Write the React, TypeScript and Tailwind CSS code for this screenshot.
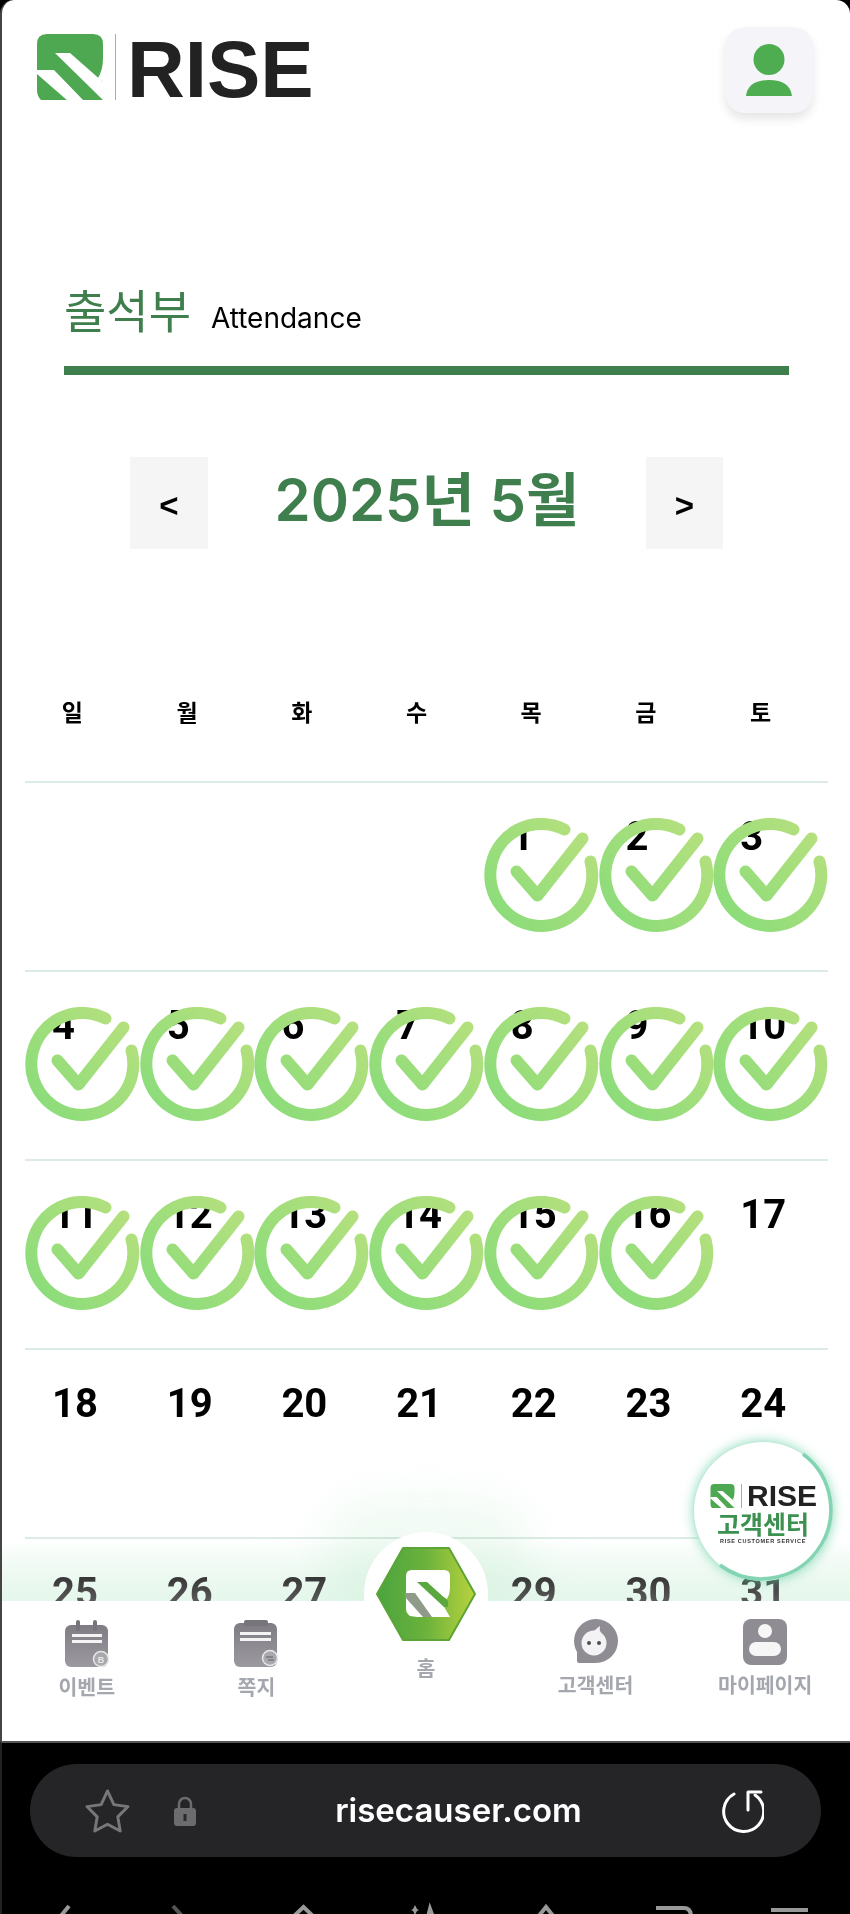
const ko = { fontFamily: '"Noto Sans CJK KR", "Noto Sans", sans-serif' };
const inter = { fontFamily: 'Inter, "Noto Sans CJK KR", sans-serif' };
const roboto = { fontFamily: 'Roboto, "Liberation Sans", sans-serif' };
const arial = { fontFamily: '"Liberation Sans", Arial, sans-serif' };

const weekdays = ['일', '월', '화', '수', '목', '금', '토'];
const weeks = [
  [0, 0, 0, 0, 1, 2, 3],
  [4, 5, 6, 7, 8, 9, 10],
  [11, 12, 13, 14, 15, 16, 17],
  [18, 19, 20, 21, 22, 23, 24],
  [25, 26, 27, 28, 29, 30, 31],
];
const lastChecked = 16;

function LogoMark({ className, green = '#4ea852' }: { className: string; green?: string }) {
  return (
    <svg viewBox="0 0 66 66" className={className}>
      <path d="M0 10Q0 0 10 0H56Q66 0 66 10V24Q66 36 61 44L66 48V66H23L4 66Q0 62 0 56Z" fill={green} />
      <polygon points="18,19 33,19 67,49 67,67" fill="#fff" />
      <polygon points="0,36 17,36 47,67 31,67 0,40" fill="#fff" />
    </svg>
  );
}

function RingCheck() {
  return (
    <svg viewBox="-57.5 -57.5 115 115" className="absolute left-0 top-[35px] w-[115px] h-[115px]">
      <defs>
        <linearGradient id="ringGrad" gradientUnits="userSpaceOnUse" x1="-50" y1="40" x2="50" y2="-50">
          <stop offset="0" stopColor="#8adc7a" />
          <stop offset="1" stopColor="#b8e07e" />
        </linearGradient>
      </defs>
      <path d="M23 -46A51 51 0 1 0 49 -14" fill="none" stroke="url(#ringGrad)" strokeWidth="12" strokeLinecap="round" />
      <path d="M-25 -4L-4 20L41 -37" fill="none" stroke="url(#ringGrad)" strokeWidth="12" strokeLinecap="round" strokeLinejoin="round" />
    </svg>
  );
}

function EventIcon() {
  return (
    <svg viewBox="0 0 44 47" className="w-[44px] h-[47px]">
      <defs>
        <linearGradient id="navGrad" x1="0" y1="0" x2="0" y2="1">
          <stop offset="0" stopColor="#7f7d83" />
          <stop offset="1" stopColor="#9c9aa0" />
        </linearGradient>
      </defs>
      <rect x="0" y="5" width="43" height="42" rx="6" fill="url(#navGrad)" />
      <rect x="11" y="0" width="4" height="11" rx="2" fill="#77757b" />
      <rect x="28" y="0" width="4" height="11" rx="2" fill="#77757b" />
      <rect x="7" y="14" width="30" height="3" fill="#f4f4f4" />
      <rect x="7" y="20" width="30" height="3" fill="#f4f4f4" />
      <circle cx="36" cy="39" r="7.5" fill="#a9a8ad" stroke="#e8e8e8" strokeWidth="1.5" />
      <text x="36" y="42.5" textAnchor="middle" fontSize="9" fontWeight="700" fill="#e8e8e8" style={arial}>B</text>
    </svg>
  );
}

function NoteIcon() {
  return (
    <svg viewBox="0 0 44 47" className="w-[44px] h-[47px]">
      <rect x="0" y="3" width="43" height="44" rx="6" fill="url(#navGrad)" />
      <rect x="10" y="0" width="24" height="6" rx="2" fill="#77757b" />
      <rect x="6" y="12" width="31" height="3" fill="#f4f4f4" />
      <rect x="6" y="18" width="31" height="3" fill="#f4f4f4" />
      <circle cx="36" cy="38" r="7.5" fill="#a9a8ad" stroke="#e8e8e8" strokeWidth="1.5" />
      <path d="M32 37h7M34 40h6" stroke="#77757b" strokeWidth="1.5" />
    </svg>
  );
}

function ChatIcon() {
  return (
    <svg viewBox="0 0 44 44" className="w-[44px] h-[44px]">
      <path d="M22 0A22 22 0 1 1 22 44H5Q3 44 3 42V33A22 22 0 0 1 22 0Z" fill="#8f8d93" />
      <circle cx="20" cy="24" r="12.5" fill="#f3f3f5" />
      <path d="M20 12Q23 9 26 7Q25 11 27 14Z" fill="#f3f3f5" />
      <circle cx="15" cy="24" r="2" fill="#4f4d53" />
      <circle cx="25" cy="24" r="2" fill="#4f4d53" />
    </svg>
  );
}

function MyPageIcon() {
  return (
    <svg viewBox="0 0 44 46" className="w-[44px] h-[46px]">
      <rect x="0" y="0" width="44" height="46" rx="8" fill="#8f8d93" />
      <circle cx="22" cy="12" r="7" fill="#f6f6f6" />
      <rect x="6" y="23" width="32" height="14" rx="7" fill="#f6f6f6" />
    </svg>
  );
}

function HomeHex() {
  return (
    <svg viewBox="0 0 100 94" className="w-[100px] h-[94px]">
      <defs>
        <linearGradient id="hexGrad" x1="0" y1="0" x2="1" y2="0">
          <stop offset="0" stopColor="#4aa43f" />
          <stop offset="0.5" stopColor="#6cb23c" />
          <stop offset="1" stopColor="#b9d33e" />
        </linearGradient>
      </defs>
      <polygon points="1,47 27,1 73,1 99,47 73,93 27,93" fill="url(#hexGrad)" stroke="#5da436" strokeWidth="2" strokeLinejoin="round" />
      <path d="M30 29Q30 23 36 23H68Q74 23 74 29V41Q74 47 71 52L60 46L74 70H41L34 69Q30 66 30 62Z" fill="#fff" />
      <polygon points="41,35 51,35 72,54 72,60 68,60" fill="#5aa83e" />
      <polygon points="29,46 39,46 56,70 47,70 29,50" fill="#8f9a88" />
    </svg>
  );
}

export default function App() {
  return (
    <div className="w-[850px] h-[1914px] bg-black flex flex-col overflow-hidden">
      <div className="relative h-[1741px] shrink-0 overflow-hidden rounded-t-[14px] border-l-2 border-[#444] bg-white">
        <div className="flex justify-between items-start h-[113px] pt-[27px] pl-[35px] pr-[37px]">
          <div className="flex items-center h-[66px] mt-[7px]">
            <LogoMark className="w-[66px] h-[66px]" />
            <div className="w-px h-[66px] bg-[#aaa] ml-[12px]" />
            <span className="ml-[11px] text-[80px] font-bold leading-none text-[#222] mt-[6px]" style={arial}>RISE</span>
          </div>
          <div className="w-[88px] h-[86px] rounded-[20px] bg-[#f5f5f9] shadow-[0_6px_10px_rgba(0,0,0,0.1)] flex items-center justify-center">
            <svg viewBox="0 0 46 52" className="w-[46px] h-[52px]">
              <ellipse cx="23" cy="15.5" rx="15.5" ry="15.5" fill="#4fad51" />
              <path d="M0 52Q2 36 23 36T46 52Z" fill="#4fad51" />
            </svg>
          </div>
        </div>

        <div className="mt-[160px] ml-[62px] w-[725px] h-[93px] flex items-baseline">
          <span className="text-[46px] leading-[70px] text-[#3f7f4d]" style={ko}>출석부</span>
          <span className="ml-[20px] text-[28px] text-black" style={inter}>Attendance</span>
        </div>
        <div className="ml-[62px] w-[725px] h-[9px] bg-[#3f7f4d]" />

        <div className="mt-[82px] ml-[128px] w-[593px] h-[92px] flex items-center justify-between">
          <div className="w-[78px] h-[92px] pt-[5px] bg-[#f5f5f5] flex items-center justify-center text-[33px] font-bold text-black" style={arial}>&lt;</div>
          <div className="pb-[6px] text-[58px] font-semibold text-[#3f7f4d] leading-none" style={inter}>2025년 5월</div>
          <div className="w-[77px] h-[92px] pt-[5px] bg-[#f5f5f5] flex items-center justify-center text-[33px] font-bold text-black" style={arial}>&gt;</div>
        </div>

        <div className="mt-[100px] pb-[8px] ml-[23px] w-[803px] h-[132px] grid grid-cols-7 items-center">
          {weekdays.map(d => (
            <div key={d} className="text-center pr-[20px] text-[23px] font-bold text-black" style={ko}>{d}</div>
          ))}
        </div>

        <div className="ml-[23px] w-[803px]">
          {weeks.map((week, i) => (
            <div key={i} className="grid grid-cols-7 h-[189px] border-t-2 border-[#dcebe6]">
              {week.map((day, j) => (
                <div key={j} className="relative pt-[34px] pl-[27px] text-left text-[40px] leading-[40px] font-bold text-black" style={roboto}>
                  {day > 0 ? day : ''}
                  {day > 0 && day <= lastChecked && <RingCheck />}
                </div>
              ))}
            </div>
          ))}
        </div>

        {/* green glow behind the tab bar */}
        <div className="absolute left-0 right-0 top-[1540px] h-[61px] bg-gradient-to-b from-white to-[#d8f3e2] mix-blend-multiply" />
        <div className="absolute left-0 right-0 top-[1540px] h-[61px] bg-gradient-to-b from-white/0 to-white/35" />
        <div className="absolute left-[320px] top-[1500px] w-[210px] h-[110px] rounded-full bg-[#f0faf3] blur-xl mix-blend-multiply" />

        <div className="absolute left-0 right-0 bottom-0 h-[140px] rounded-t-[30px] bg-white grid grid-cols-5">
          <div className="flex flex-col items-center pt-[19px]">
            <EventIcon />
            <span className="mt-[5px] text-[20.5px] leading-[28px] font-bold text-[#a5a7af]" style={ko}>이벤트</span>
          </div>
          <div className="flex flex-col items-center pt-[19px]">
            <NoteIcon />
            <span className="mt-[5px] text-[20.5px] leading-[28px] font-bold text-[#a5a7af]" style={ko}>쪽지</span>
          </div>
          <div className="relative flex flex-col items-center pt-[52px]">
            <div className="absolute left-1/2 -translate-x-1/2 -top-[69px] w-[124px] h-[124px] rounded-full bg-white" />
            <div className="absolute left-1/2 -translate-x-1/2 -top-[54px]">
              <HomeHex />
            </div>
            <span className="relative text-[20.5px] leading-[28px] font-bold text-[#a5a7af]" style={ko}>홈</span>
          </div>
          <div className="flex flex-col items-center pt-[18px]">
            <ChatIcon />
            <span className="mt-[7px] text-[20.5px] leading-[28px] font-bold text-[#a5a7af]" style={ko}>고객센터</span>
          </div>
          <div className="flex flex-col items-center pt-[18px]">
            <MyPageIcon />
            <span className="mt-[5px] text-[20.5px] leading-[28px] font-bold text-[#a5a7af]" style={ko}>마이페이지</span>
          </div>
        </div>

        {/* floating customer service button */}
        <div className="absolute left-[691px] top-[1441px] w-[140px] h-[140px] rounded-full bg-white border border-[#bfe9d6] shadow-[0_0_12px_rgba(110,210,170,0.8)] flex flex-col items-center pt-[42px]">
          <svg viewBox="-70 -70 140 140" className="absolute -left-px -top-px w-[140px] h-[140px]">
            <path d="M40 -57A69 69 0 0 1 -43 54" fill="none" stroke="#82d4b2" strokeWidth="3.5" />
          </svg>
          <div className="flex items-center h-[24px]">
            <LogoMark className="w-[27px] h-[24px]" />
            <div className="w-px h-[24px] bg-[#aaa] ml-[5px]" />
            <span className="ml-[5px] text-[30px] font-bold leading-none text-[#222]" style={arial}>RISE</span>
          </div>
          <span className="text-[25px] leading-[28px] mt-[1px] font-bold text-[#3c9150]" style={ko}>고객센터</span>
          <span className="text-[5.5px] leading-[8px] font-bold tracking-[0.7px] text-[#333]" style={arial}>RISE CUSTOMER SERVICE</span>
        </div>
      </div>

      <div className="flex-1 bg-black border-t-2 border-[#555] border-l-2 border-l-[#222]">
        <div className="mt-[21px] ml-[28px] w-[791px] h-[93px] rounded-full bg-[#252527] flex items-center pl-[54px] pr-[57px]">
          <svg viewBox="0 0 48 46" className="w-[47px] h-[45px] shrink-0">
            <polygon points="24,3 30.5,17 45,19 34.5,29.5 37,44 24,37 11,44 13.5,29.5 3,19 17.5,17" fill="none" stroke="#777" strokeWidth="3" strokeLinejoin="round" />
          </svg>
          <svg viewBox="0 0 24 30" className="ml-[42px] w-[24px] h-[30px] shrink-0">
            <path d="M6 13V8a6 6 0 0 1 12 0v5" fill="none" stroke="#6c6c6e" strokeWidth="2.5" />
            <rect x="1" y="12" width="22" height="18" rx="3" fill="#6c6c6e" />
            <rect x="10.5" y="18" width="3" height="7" fill="#2a2a2c" />
          </svg>
          <div className="flex-1 text-center text-[33px] font-semibold text-white leading-none" style={inter}>risecauser.com</div>
          <svg viewBox="0 0 44 44" className="w-[44px] h-[44px] shrink-0">
            <path d="M14 5A20 20 0 1 0 35 6" fill="none" stroke="#fff" strokeWidth="3" strokeLinecap="round" />
            <path d="M41 3H28L28 21" fill="none" stroke="#fff" strokeWidth="3" strokeLinecap="round" strokeLinejoin="round" />
          </svg>
        </div>
        <svg viewBox="0 0 848 57" className="w-[848px] h-[57px]">
          <g fill="none" stroke="#999" strokeWidth="4">
            <path d="M67 49L58 60" />
            <path d="M171 49L181 60" stroke="#555" />
            <path d="M291 60L301.5 50L312 60" />
            <path d="M426 60L428 52L431 60" />
            <path d="M536 60L544 50L552 60" />
            <path d="M654 51H682Q689 51 689 60" />
            <path d="M769 53H806" />
          </g>
          <path d="M413 48L415 52L417 53L415 54L413 58L411 54L409 53L411 52Z" fill="#999" />
        </svg>
      </div>
    </div>
  );
}
